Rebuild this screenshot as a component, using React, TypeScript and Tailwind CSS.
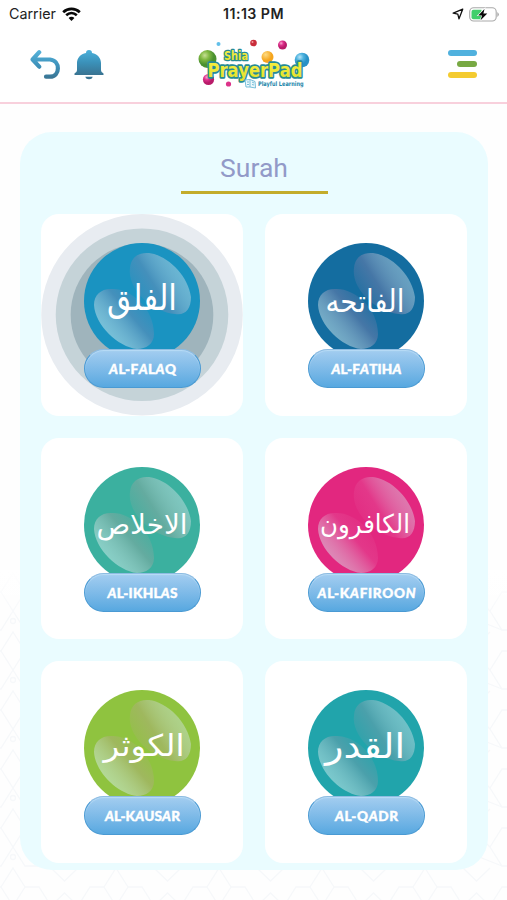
import React from "react";

type Surah = {
  id: string;
  label: string;
  arabic: string;
  color: string;
  shade: string;
  x: number;
  y: number;
  size: number;
  width: number;
  labelWidth: number;
  active?: boolean;
};

const surahs: Surah[] = [
  { id: "falaq", label: "AL-FALAQ", arabic: "الفلق", color: "#1a93c1", shade: "#4f8fba", x: 58, y: 67, size: 36, width: 70, labelWidth: 67, active: true },
  { id: "fatiha", label: "AL-FATIHA", arabic: "الفاتحه", color: "#146da0", shade: "#5279a8", x: 57, y: 69, size: 31, width: 79, labelWidth: 70 },
  { id: "ikhlas", label: "AL-IKHLAS", arabic: "الاخلاص", color: "#3bb09f", shade: "#6eaaa0", x: 58, y: 67, size: 27, width: 91, labelWidth: 70 },
  { id: "kafiroon", label: "AL-KAFIROON", arabic: "الكافرون", color: "#e2277f", shade: "#e33c8c", x: 57, y: 66, size: 26, width: 90, labelWidth: 98 },
  { id: "kausar", label: "AL-KAUSAR", arabic: "الكوثر", color: "#8fc33f", shade: "#a3b566", x: 60, y: 66, size: 30, width: 81, labelWidth: 75 },
  { id: "qadr", label: "AL-QADR", arabic: "القدر", color: "#21a4ab", shade: "#559fab", x: 57, y: 68, size: 34, width: 80, labelWidth: 63 },
];

function BubbleBadge({ surah }: { surah: Surah }) {
  const g = "gloss-" + surah.id;
  return (
    <div className="relative flex flex-col items-center">
      <svg className="block h-[106px] w-[116px]" viewBox="0 0 116 106">
        <defs>
          <linearGradient id={g + "-a"} x1="0.15" y1="0.75" x2="0.95" y2="0.25">
            <stop offset="0" stopColor={surah.shade} stopOpacity="0.3" />
            <stop offset="0.35" stopColor={surah.shade} stopOpacity="0.8" />
            <stop offset="1" stopColor="#d8eef2" stopOpacity="0.42" />
          </linearGradient>
          <linearGradient id={g + "-b"} x1="0.85" y1="0.25" x2="0.2" y2="0.8">
            <stop offset="0" stopColor={surah.shade} stopOpacity="0.3" />
            <stop offset="0.35" stopColor={surah.shade} stopOpacity="0.8" />
            <stop offset="1" stopColor="#d8f2f2" stopOpacity="0.5" />
          </linearGradient>
        </defs>
        <circle cx="58" cy="58" r="58" fill={surah.color} />
        <path d="M46 25C47 14 55 9 65 10C83 12 104 32 107 54C107 66 101 73 91 71C68 69 43 46 46 25Z" fill={`url(#${g}-a)`} />
        <path d="M10 62C10 51 18 45 29 46C47 46 70 65 70 91C70 101 62 106 53 106C34 104 11 82 10 62Z" fill={`url(#${g}-b)`} />
        <text
          x={surah.x}
          y={surah.y}
          textAnchor="middle"
          direction="rtl"
          textLength={surah.width}
          lengthAdjust="spacingAndGlyphs"
          fontSize={surah.size}
          fill="#ffffff"
          className="[font-family:'DejaVu_Sans',sans-serif]"
        >
          {surah.arabic}
        </text>
      </svg>
      <div className="h-[39px] w-[117px] rounded-full border border-[#4a9ad3] border-t-[#8dbce2] bg-linear-to-b from-[#a3cdf0] to-[#57a8e0] shadow-[inset_0_1px_1px_#b9dcf6]">
        <svg className="block h-full w-full overflow-visible" viewBox="0 0 115 37">
          <text
            x="57.5"
            y="24"
            textAnchor="middle"
            textLength={surah.labelWidth}
            lengthAdjust="spacing"
            fontSize="13.6"
            fontWeight="900"
            fill="#ffffff"
            stroke="#ffffff"
            strokeWidth="0.4"
            className="[font-family:Lato,sans-serif]"
          >
            {surah.label.split(/(A|N)/).map((part, i) => (
              <tspan key={i} fontStyle={part === "A" || part === "N" ? "italic" : "normal"}>{part}</tspan>
            ))}
          </text>
        </svg>
      </div>
    </div>
  );
}

function SurahCard({ surah }: { surah: Surah }) {
  return (
    <button className="relative flex h-[201.5px] w-[202px] items-start justify-center overflow-hidden rounded-[18px] bg-white pt-[29px]">
      {surah.active && (
        <svg className="absolute inset-0 h-full w-full" viewBox="0 0 202 202">
          <circle cx="101" cy="101" r="101" fill="#e8ecf1" />
          <circle cx="101" cy="101" r="86.5" fill="#c5d3d8" />
          <circle cx="101" cy="101" r="71.5" fill="#9fb4bc" />
        </svg>
      )}
      <BubbleBadge surah={surah} />
    </button>
  );
}

function StarLattice() {
  return (
    <svg className="absolute inset-x-0 top-[570px] h-[330px] w-full" viewBox="0 0 507 330">
      <defs>
        <pattern id="lattice" x="13" y="2" width="103" height="59" patternUnits="userSpaceOnUse">
          <g fill="none" stroke="#f6f8fa" strokeWidth="1.3">
            <path d="M0 1L12 20L0 39L-12 20ZM103 1L115 20L103 39L91 20Z" />
            <path d="M12 20H26L38 39L26 58H12L0 39M91 20H77L65 39L77 58H91L103 39" />
            <path d="M38 1L51.500 14L65 1M38 39L51.500 26L65 39M26 58L51.500 48L77 58" />
            <circle cx="51.500" cy="44" r="3" />
            <circle cx="0" cy="49" r="2.500" />
            <circle cx="103" cy="49" r="2.500" />
          </g>
        </pattern>
        <linearGradient id="lattice-fade" x1="0" y1="0" x2="0" y2="1">
          <stop offset="0" stopColor="#ffffff" />
          <stop offset="0.15" stopColor="#ffffff" stopOpacity="0" />
        </linearGradient>
      </defs>
      <rect width="507" height="330" fill="url(#lattice)" />
      <rect width="507" height="330" fill="url(#lattice-fade)" />
    </svg>
  );
}

function Logo() {
  return (
    <svg className="block h-[54px] w-[114px] overflow-visible" viewBox="197 37 114 54">
      <defs>
        <radialGradient id="orb-green" cx=".35" cy=".3"><stop offset="0" stopColor="#c6df94" /><stop offset=".5" stopColor="#80b841" /><stop offset="1" stopColor="#4b9130" /></radialGradient>
        <radialGradient id="orb-pink" cx=".35" cy=".3"><stop offset="0" stopColor="#f7a6cf" /><stop offset=".5" stopColor="#df2f8c" /><stop offset="1" stopColor="#b81c69" /></radialGradient>
        <radialGradient id="orb-blue" cx=".35" cy=".3"><stop offset="0" stopColor="#b9e4f6" /><stop offset=".5" stopColor="#4eb3df" /><stop offset="1" stopColor="#2891c6" /></radialGradient>
        <radialGradient id="orb-gold" cx=".35" cy=".3"><stop offset="0" stopColor="#fddb83" /><stop offset="1" stopColor="#f5a51d" /></radialGradient>
        <linearGradient id="word" x1="0" y1="0" x2="0" y2="1"><stop offset=".2" stopColor="#f8ee3f" /><stop offset="1" stopColor="#dfdf2c" /></linearGradient>
      </defs>
      <circle cx="207.500" cy="59" r="9" fill="url(#orb-green)" />
      <circle cx="208.500" cy="79.500" r="5.600" fill="url(#orb-pink)" />
      <circle cx="228.500" cy="84" r="2.600" fill="#dc3289" />
      <circle cx="218.500" cy="44" r="2" fill="#62bfe9" />
      <circle cx="253.500" cy="43" r="3.300" fill="#c92d3b" />
      <circle cx="252.500" cy="42" r="1" fill="#f19a9a" />
      <circle cx="282.500" cy="45" r="4.500" fill="url(#orb-pink)" />
      <circle cx="267.500" cy="57" r="6" fill="url(#orb-gold)" />
      <circle cx="302" cy="60" r="7.300" fill="url(#orb-blue)" />
      <g className="[font-family:'DejaVu_Sans',sans-serif]" fontWeight="700" strokeLinejoin="round" paintOrder="stroke">
        <text x="224" y="60" fontSize="11.500" textLength="24" lengthAdjust="spacingAndGlyphs" fill="url(#word)" stroke="#278b94" strokeWidth="2.600">Shia</text>
        <text x="207.500" y="76.500" fontSize="20" textLength="95" lengthAdjust="spacingAndGlyphs" fill="url(#word)" stroke="#278b94" strokeWidth="3.600">PrayerPad</text>
      </g>
      <g fill="#eef9fc" stroke="#78bfd9" strokeWidth="1">
        <path d="M245 80L250 79.500L255 81.500L255.500 88L250 87L246 87Z" />
        <path d="M250 79.500V87M247 82L249 82M252 82L254 83M247 84.500H249M252 84.500L254 85" fill="none" />
      </g>
      <text x="258" y="85.700" fontSize="6.300" fontWeight="700" textLength="45.500" lengthAdjust="spacingAndGlyphs" fill="#2184a9" className="[font-family:'DejaVu_Sans',sans-serif]">Playful Learning</text>
    </svg>
  );
}

function StatusBar() {
  return (
    <div className="grid h-7 grid-cols-3 items-center pl-[9px] pr-[9px] text-[#222] [font-family:Inter,sans-serif]">
      <div className="flex items-center gap-[6px] text-[14.3px] leading-7">
        <span>Carrier</span>
        <svg className="h-[15px] w-[19px]" viewBox="0 0 19 15" fill="none" stroke="#080808">
          <path d="M1.200 5.200C5.800 .7 13.200 .7 17.800 5.200" strokeWidth="2.700" />
          <path d="M4.200 8.300C7.300 5.400 11.700 5.400 14.800 8.300" strokeWidth="2.600" />
          <path d="M6.600 10.900C8.200 9.300 10.800 9.300 12.400 10.900L9.500 14Z" fill="#080808" stroke="none" />
        </svg>
      </div>
      <span className="whitespace-nowrap text-center text-[14.2px] font-semibold tracking-[0.45px]">11:13 PM</span>
      <div className="-mr-px flex items-center justify-end gap-[5px]">
        <svg className="h-3 w-3" viewBox="0 0 12 12" fill="none" stroke="#111" strokeWidth="1.300" strokeLinejoin="round">
          <path d="M10.700 1.200L1.200 5.200L5.800 6.200L7 10.800Z" />
        </svg>
        <svg className="mr-[-1px] h-[15px] w-[31px]" viewBox="0 0 31 15">
          <rect x=".7" y=".8" width="26.500" height="13.200" rx="4" fill="#fff" stroke="#a9a9a9" strokeWidth="1.100" />
          <path d="M4.500 2.800H12.500V12.200H4.500Q2.500 12.200 2.500 10.200V4.800Q2.500 2.800 4.500 2.800Z" fill="#42cf6c" />
          <path d="M28.300 5Q31.500 7.400 28.300 10Z" fill="#aaa" />
          <path d="M15.500 2L9.200 8.500H13L11.600 13.200L18.300 6.600H14.400Z" fill="#080808" stroke="#fff" strokeWidth="1.200" paintOrder="stroke" />
        </svg>
      </div>
    </div>
  );
}

export default function App() {
  return (
    <div className="relative h-[900px] w-[507px] overflow-hidden bg-[#fefefe]">
      <StarLattice />
      <header className="relative h-[104px] border-b-2 border-[#f8d0dc] bg-white">
        <StatusBar />
        <div className="flex h-[74px] items-start justify-between pl-[30px] pr-[30px] pt-[9px]">
          <div className="flex w-[168px] items-start gap-[14px] pt-3">
            <svg className="h-8 w-[30px]" viewBox="0 0 30 32" fill="none">
              <defs>
                <linearGradient id="back" gradientUnits="userSpaceOnUse" x1="0" y1="0" x2="0" y2="31"><stop stopColor="#59b6dd" /><stop offset=".5" stopColor="#3f94bd" /><stop offset="1" stopColor="#39718e" /></linearGradient>
              </defs>
              <path d="M9.200 3.200L2.600 10.500L9.200 17.700M3 10.500H20C30.500 11.500 30.500 27.500 20 27.700H16" stroke="url(#back)" strokeWidth="4.200" strokeLinecap="round" strokeLinejoin="round" />
            </svg>
            <svg className="h-[31px] w-[30px]" viewBox="0 0 30 31">
              <defs>
                <linearGradient id="bell" x1="0" y1="0" x2="0" y2="1"><stop stopColor="#4bb1db" /><stop offset=".5" stopColor="#3b91b9" /><stop offset="1" stopColor="#397391" /></linearGradient>
              </defs>
              <path d="M15 1C17 1 18 2 18 4C23.500 5 27 9 27 14V21C27 23 28.500 23.500 29.500 24.500V26H.5V24.500C1.500 23.500 3 23 3 21V14C3 9 6.500 5 12 4C12 2 13 1 15 1Z" fill="url(#bell)" />
              <path d="M11.300 27.700H18.700C18.300 29.400 17 30.200 15 30.200S11.700 29.400 11.300 27.700Z" fill="#397391" />
            </svg>
          </div>
          <Logo />
          <div className="flex w-[168px] flex-col items-end gap-[5px] pt-[12.500px]">
            <span className="h-[6px] w-[29px] rounded-full bg-[#50b1de]" />
            <span className="h-[6px] w-5 rounded-full bg-[#78a943]" />
            <span className="h-[6px] w-[29px] rounded-full bg-[#f4cb30]" />
          </div>
        </div>
      </header>
      <main className="relative ml-5 mt-7 flex h-[738px] w-[468px] flex-col items-center rounded-[32px] bg-[#eafcff]">
        <h1 className="h-[59px] pt-[20px] text-[26.5px] font-normal leading-8 text-[#929ac8] [font-family:Roboto,sans-serif]">Surah</h1>
        <div className="h-[2.5px] w-[147px] shrink-0 bg-[#c3ac2b]" />
        <div className="mt-[20.500px] grid grid-cols-2 gap-x-[22px] gap-y-[22px]">
          {surahs.map((surah) => <SurahCard key={surah.id} surah={surah} />)}
        </div>
      </main>
    </div>
  );
}
